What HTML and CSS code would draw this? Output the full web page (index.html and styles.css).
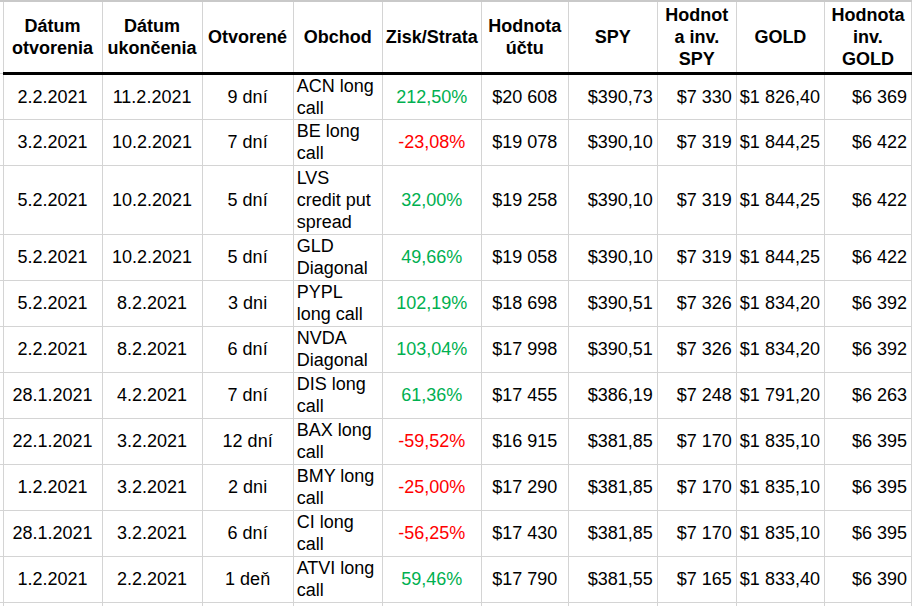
FILE: index.html
```html
<!DOCTYPE html>
<html lang="sk">
<head>
<meta charset="utf-8">
<title>Obchody</title>
<link rel="stylesheet" href="styles.css">
</head>
<body>
<table class="sheet">
  <colgroup>
    <col class="w-edge">
    <col class="w-open">
    <col class="w-close">
    <col class="w-days">
    <col class="w-trade">
    <col class="w-pl">
    <col class="w-acct">
    <col class="w-spy">
    <col class="w-invspy">
    <col class="w-gold">
    <col class="w-invgold">
  </colgroup>
  <thead>
    <tr>
      <th class="edge"></th>
      <th>Dátum<br>otvorenia</th>
      <th>Dátum<br>ukončenia</th>
      <th>Otvorené</th>
      <th>Obchod</th>
      <th>Zisk/Strata</th>
      <th>Hodnota<br>účtu</th>
      <th>SPY</th>
      <th>Hodnot<br>a inv.<br>SPY</th>
      <th>GOLD</th>
      <th>Hodnota<br>inv.<br>GOLD</th>
    </tr>
  </thead>
  <tbody>
    <tr>
      <td class="edge"></td><td>2.2.2021</td><td>11.2.2021</td><td>9 dní</td>
      <td class="trade">ACN long<br>call</td><td class="gain">212,50%</td><td>$20 608</td>
      <td class="num">$390,73</td><td class="num">$7 330</td><td class="num">$1 826,40</td><td class="num">$6 369</td>
    </tr>
    <tr>
      <td class="edge"></td><td>3.2.2021</td><td>10.2.2021</td><td>7 dní</td>
      <td class="trade">BE long<br>call</td><td class="loss">-23,08%</td><td>$19 078</td>
      <td class="num">$390,10</td><td class="num">$7 319</td><td class="num">$1 844,25</td><td class="num">$6 422</td>
    </tr>
    <tr class="tall">
      <td class="edge"></td><td>5.2.2021</td><td>10.2.2021</td><td>5 dní</td>
      <td class="trade">LVS<br>credit put<br>spread</td><td class="gain">32,00%</td><td>$19 258</td>
      <td class="num">$390,10</td><td class="num">$7 319</td><td class="num">$1 844,25</td><td class="num">$6 422</td>
    </tr>
    <tr>
      <td class="edge"></td><td>5.2.2021</td><td>10.2.2021</td><td>5 dní</td>
      <td class="trade">GLD<br>Diagonal</td><td class="gain">49,66%</td><td>$19 058</td>
      <td class="num">$390,10</td><td class="num">$7 319</td><td class="num">$1 844,25</td><td class="num">$6 422</td>
    </tr>
    <tr>
      <td class="edge"></td><td>5.2.2021</td><td>8.2.2021</td><td>3 dni</td>
      <td class="trade">PYPL<br>long call</td><td class="gain">102,19%</td><td>$18 698</td>
      <td class="num">$390,51</td><td class="num">$7 326</td><td class="num">$1 834,20</td><td class="num">$6 392</td>
    </tr>
    <tr>
      <td class="edge"></td><td>2.2.2021</td><td>8.2.2021</td><td>6 dní</td>
      <td class="trade">NVDA<br>Diagonal</td><td class="gain">103,04%</td><td>$17 998</td>
      <td class="num">$390,51</td><td class="num">$7 326</td><td class="num">$1 834,20</td><td class="num">$6 392</td>
    </tr>
    <tr>
      <td class="edge"></td><td>28.1.2021</td><td>4.2.2021</td><td>7 dní</td>
      <td class="trade">DIS long<br>call</td><td class="gain">61,36%</td><td>$17 455</td>
      <td class="num">$386,19</td><td class="num">$7 248</td><td class="num">$1 791,20</td><td class="num">$6 263</td>
    </tr>
    <tr>
      <td class="edge"></td><td>22.1.2021</td><td>3.2.2021</td><td>12 dní</td>
      <td class="trade">BAX long<br>call</td><td class="loss">-59,52%</td><td>$16 915</td>
      <td class="num">$381,85</td><td class="num">$7 170</td><td class="num">$1 835,10</td><td class="num">$6 395</td>
    </tr>
    <tr>
      <td class="edge"></td><td>1.2.2021</td><td>3.2.2021</td><td>2 dni</td>
      <td class="trade">BMY long<br>call</td><td class="loss">-25,00%</td><td>$17 290</td>
      <td class="num">$381,85</td><td class="num">$7 170</td><td class="num">$1 835,10</td><td class="num">$6 395</td>
    </tr>
    <tr>
      <td class="edge"></td><td>28.1.2021</td><td>3.2.2021</td><td>6 dní</td>
      <td class="trade">CI long<br>call</td><td class="loss">-56,25%</td><td>$17 430</td>
      <td class="num">$381,85</td><td class="num">$7 170</td><td class="num">$1 835,10</td><td class="num">$6 395</td>
    </tr>
    <tr>
      <td class="edge"></td><td>1.2.2021</td><td>2.2.2021</td><td>1 deň</td>
      <td class="trade">ATVI long<br>call</td><td class="gain">59,46%</td><td>$17 790</td>
      <td class="num">$381,55</td><td class="num">$7 165</td><td class="num">$1 833,40</td><td class="num">$6 390</td>
    </tr>
    <tr class="empty">
      <td class="edge"></td><td></td><td></td><td></td><td></td><td></td><td></td><td></td><td></td><td></td><td></td>
    </tr>
  </tbody>
</table>
</body>
</html>
```

FILE: styles.css
```css
html, body {
  margin: 0;
  padding: 0;
  background: #ffffff;
  overflow: hidden;
  height: 606px;
}

.sheet {
  border-collapse: collapse;
  table-layout: fixed;
  width: 912px;
  font-family: "Liberation Sans", Arial, sans-serif;
  font-size: 18px;
  line-height: 22px;
  color: #000000;
}

.w-edge { width: 3px; }
.w-open { width: 99px; }
.w-close { width: 100px; }
.w-days { width: 91px; }
.w-trade { width: 89px; }
.w-pl { width: 99px; }
.w-acct { width: 87px; }
.w-spy { width: 89px; }
.w-invspy { width: 79px; }
.w-gold { width: 88px; }
.w-invgold { width: 87px; }

.sheet th,
.sheet td {
  border: 1px solid #d4d4d4;
  padding: 0 3px;
  text-align: center;
  vertical-align: middle;
  white-space: nowrap;
  overflow: hidden;
}

.sheet thead tr {
  height: 72px;
}

.sheet thead th {
  font-weight: bold;
  border-top: 2px solid #c9c9c9;
  border-bottom: 3px solid #000000;
}

.sheet thead th.edge {
  border-bottom: 1px solid #d4d4d4;
}

.sheet .edge {
  border-left: none;
  padding: 0;
}

.sheet tbody tr {
  height: 46px;
}

.sheet tbody tr.tall {
  height: 69px;
}

.sheet tbody tr.empty {
  height: 30px;
}

.sheet td.trade {
  text-align: left;
  padding-left: 3px;
}

.sheet td.num {
  text-align: right;
  padding-right: 4px;
}

.gain {
  color: #00b050;
}

.loss {
  color: #ff0000;
}
```
